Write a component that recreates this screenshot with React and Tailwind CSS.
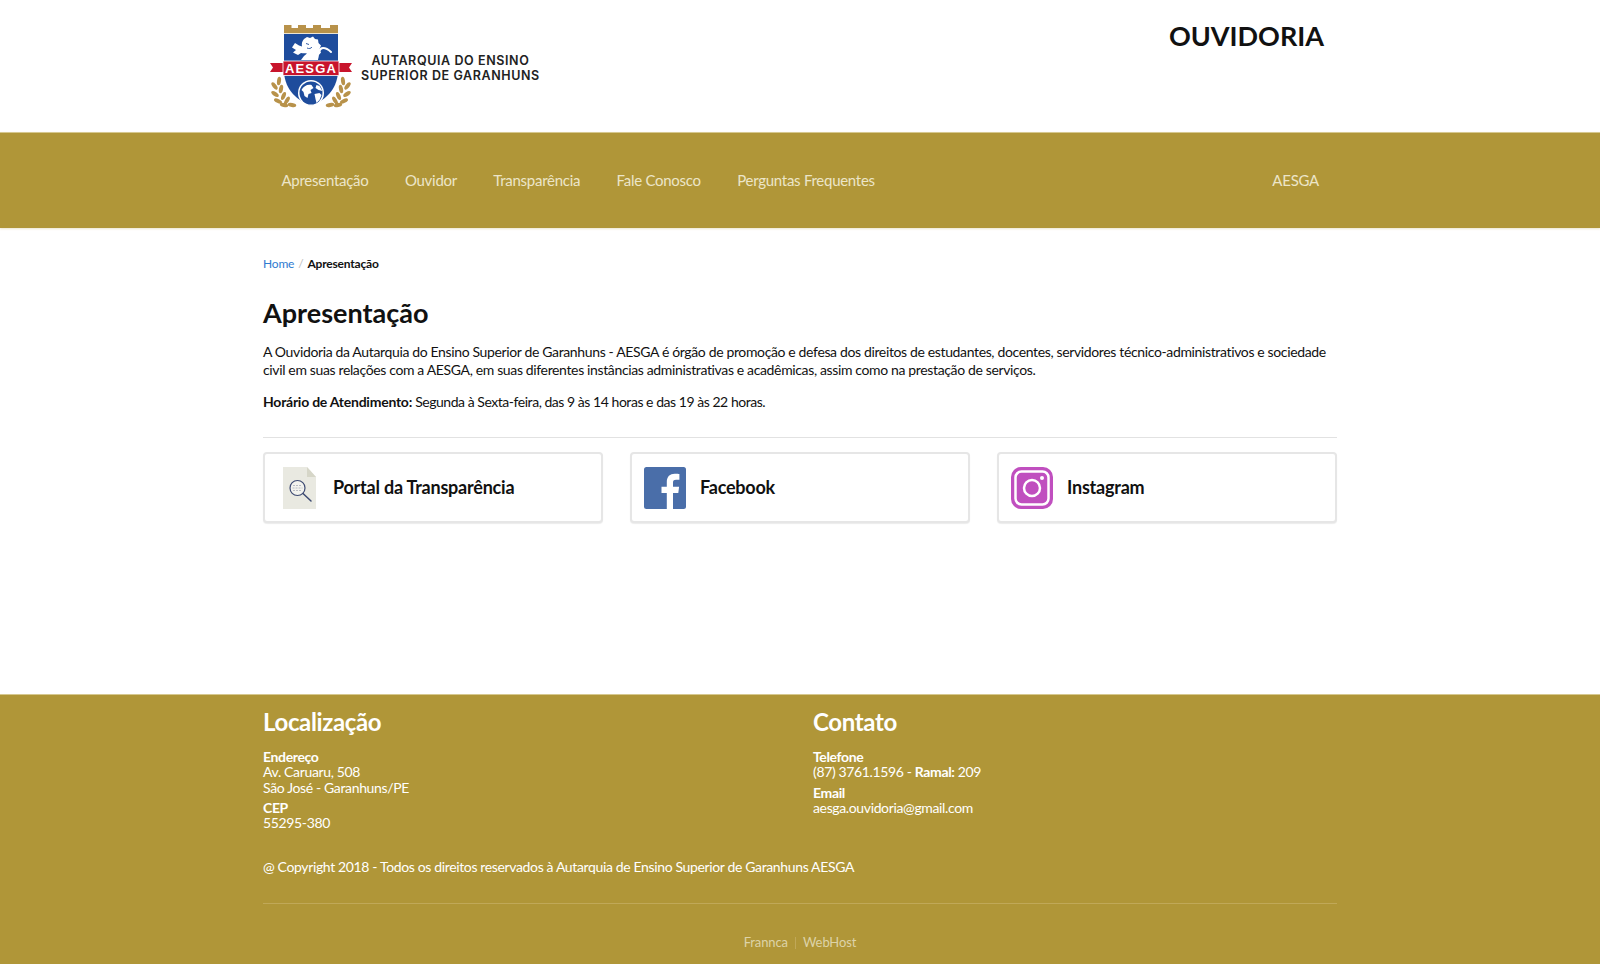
import { Fragment } from 'react';

const navLinks = ['Apresentação', 'Ouvidor', 'Transparência', 'Fale Conosco', 'Perguntas Frequentes'];

const laurelLeaves = [
  [12, 62, 8],
  [7.500, 67, -38],
  [14, 70, 12],
  [8, 75, -55],
  [16.500, 77, 22],
  [11, 82, -65],
  [20, 81.500, 32],
  [17, 86, -75],
  [25, 86, -80],
];

const Laurel = ({ flip = false }) => (
  <g transform={flip ? 'translate(88 0) scale(-1 1)' : undefined} fill="#b8924a">
    {laurelLeaves.map(([x, y, r]) => (
      <ellipse key={`${x}-${y}`} cx={x} cy={y} rx="2" ry="4.300" transform={`rotate(${r} ${x} ${y})`} />
    ))}
  </g>
);

const Crest = () => (
  <svg viewBox="0 0 89 92" className="h-[92px] w-[89px] shrink-0" aria-hidden="true">
    {/* crown */}
    <path d="M17 6h7.500v3H31V6h8v3h7V6h8v3h9V6h8v8.300H17z" fill="#b8924a" />
    {/* shield */}
    <path d="M17 15h54v36c0 17-10 29-27 36C27 80 17 68 17 51z" fill="#1e4c9c" />
    {/* lion */}
    <path
      d="M37 20L40 18L43 19L46 17.500L48 20L51 20.500L51.500 24L54 26.500L52.500 30L54 33.500L51.500 36.500L51 41H34L37 37L40 34.500C38 34 36 34.500 34 34L31 36L26 33.500L29 31L25 28.500L28 24L32 26.500L35 27.500C34.500 25 35 22 37 20z"
      fill="#ffffff"
    />
    <path d="M39 24.500l3 1M40 29c2 1 4 .500 5-1" fill="none" stroke="#1e4c9c" strokeWidth="0.900" />
    <path d="M50 40c1-6 2-11 6-11 3 0 5 1 8 4" fill="none" stroke="#ffffff" strokeWidth="2" strokeLinecap="round" />
    {/* ribbon */}
    <path d="M3 44h14v9H3l3-4.500z" fill="#c8142c" />
    <path d="M85 44H71v9h14l-3-4.500z" fill="#c8142c" />
    <rect x="16" y="42" width="56" height="14.500" fill="#c8142c" stroke="#ffffff" strokeWidth="0.800" />
    <text
      x="44"
      y="54.300"
      textAnchor="middle"
      fill="#ffffff"
      fontSize="13"
      fontWeight="700"
      letterSpacing="1.200"
      fontFamily="'Liberation Sans', sans-serif"
    >
      AESGA
    </text>
    {/* globe */}
    <circle cx="44" cy="74" r="13" fill="#ffffff" />
    <circle cx="44" cy="74" r="11.500" fill="#1e4c9c" />
    <path
      d="M34.500 71c2-4 6-6 10-5l2 3-3 2 1 3-3 1-1 4-3-2-1-4zM47.500 75l5-1 2 2-2 5-3 3-1-4zM49.500 66l3 1 3 5-4-1-3-2z"
      fill="#ffffff"
    />
    <Laurel />
    <Laurel flip />
  </svg>
);

const DocIcon = () => (
  <svg viewBox="0 0 33 42" className="h-[42px] w-[33px]" aria-hidden="true">
    <path d="M0 0h24l9 10v32H0z" fill="#e9e9e1" />
    <path d="M24 0l9 10h-9z" fill="#d6d6c8" />
    <circle cx="14.500" cy="21" r="7.500" fill="#f3f3ee" stroke="#3d4a72" strokeWidth="1.200" />
    <path d="M10 18.500h9M9.500 21h10M10 23.500h9" stroke="#b9bcc4" strokeWidth="1" strokeDasharray="2 1" />
    <path d="M20 26.500l8 7.500" stroke="#3d4a72" strokeWidth="1.500" strokeLinecap="round" />
  </svg>
);

const FacebookIcon = () => (
  <svg viewBox="0 0 42 42" className="h-[42px] w-[42px]" aria-hidden="true">
    <rect width="42" height="42" rx="2.500" fill="#4a6ea9" />
    <path
      d="M29 42V26h5.300l.8-6.300H29v-4c0-1.800.5-3 3.100-3h3.300V7.100c-.6-.1-2.500-.3-4.700-.3-4.700 0-7.900 2.900-7.900 8.100v4.800h-5.300V26h5.300v16z"
      fill="#ffffff"
    />
  </svg>
);

const InstagramIcon = () => (
  <svg viewBox="0 0 42 42" className="h-[42px] w-[42px]" aria-hidden="true">
    <rect width="42" height="42" rx="10" fill="#c04fbf" />
    <rect x="4.500" y="4.500" width="33" height="33" rx="6" fill="none" stroke="#ffffff" strokeWidth="2.500" />
    <circle cx="21" cy="21" r="8" fill="none" stroke="#ffffff" strokeWidth="2.500" />
    <circle cx="31" cy="11" r="2" fill="#ffffff" />
  </svg>
);

const LinkCard = ({ icon, label, iconPad = 'pl-[12px]', gap = 'gap-[14px]' }) => (
  <a className={`flex h-[71px] items-center ${gap} ${iconPad} rounded-[4px] border-2 border-[#e6e6e6] bg-white text-[18px] font-bold tracking-[-0.22px] text-[#111111] shadow-[0_1px_1px_rgba(0,0,0,0.08)]`}>
    {icon}
    <span>{label}</span>
  </a>
);

export default function App() {
  return (
    <div className="min-h-[964px] bg-white font-['Lato','Open_Sans',sans-serif] text-[14px] text-[#111111]">
      {/* Header */}
      <header className="h-[132px]">
        <div className="mx-auto flex w-[1074px] justify-between">
          <div className="flex pt-[19px] pl-[4px]">
            <Crest />
            <div className="ml-[5px] mt-[34px] text-center font-['Inter',sans-serif] text-[12.5px] leading-[15px] font-semibold tracking-[0.6px] text-[#222222]">
              <div>AUTARQUIA DO ENSINO</div>
              <div>SUPERIOR DE GARANHUNS</div>
            </div>
          </div>
          <h2 className="pt-[19px] pr-[13px] text-[27px] leading-[34px] font-bold text-[#111111]">OUVIDORIA</h2>
        </div>
      </header>

      {/* Nav */}
      <nav className="h-[96px] border-t border-[#d6c88f] bg-[#b09638] shadow-[0_1px_2px_rgba(176,150,56,0.25)]">
        <div className="mx-auto flex h-full w-[1074px] items-center justify-between text-[15px] tracking-[-0.27px] text-[#ece5c8]">
          <ul className="ml-[0.3px] flex">
            {navLinks.map((link) => (
              <li key={link} className="px-[18.200px]">
                {link}
              </li>
            ))}
          </ul>
          <span className="px-[18px]">AESGA</span>
        </div>
      </nav>

      <main className="mx-auto h-[466px] w-[1074px] pt-[27px]">
        {/* Breadcrumb */}
        <div className="flex h-[18px] items-center text-[12px] tracking-[-0.2px]">
          <span className="text-[#2f7bd0]">Home</span>
          <span className="mx-[4px] text-[#bbbbbb]">/</span>
          <span className="font-bold">Apresentação</span>
        </div>

        <h1 className="mt-[22px] text-[27px] leading-[36px] font-bold">Apresentação</h1>

        <p className="mt-[12px] leading-[18px] tracking-[-0.36px]">
          A Ouvidoria da Autarquia do Ensino Superior de Garanhuns - AESGA é órgão de promoção e defesa dos direitos de estudantes, docentes, servidores técnico-administrativos e sociedade civil em suas relações com a AESGA, em suas diferentes instâncias administrativas e acadêmicas, assim como na prestação de serviços.
        </p>
        <p className="mt-[14px] leading-[18px] tracking-[-0.46px]">
          <strong className="tracking-[-0.24px]">Horário de Atendimento:</strong> Segunda à Sexta-feira, das 9 às 14 horas e das 19 às 22 horas.
        </p>

        <hr className="mt-[26px] border-[#e2e2e2]" />

        {/* Link cards */}
        <div className="mt-[14px] grid grid-cols-3 gap-[27px]">
          <LinkCard icon={<DocIcon />} label="Portal da Transparência" iconPad="pl-[18px]" gap="gap-[17px]" />
          <LinkCard icon={<FacebookIcon />} label="Facebook" />
          <LinkCard icon={<InstagramIcon />} label="Instagram" />
        </div>
      </main>

      {/* Footer */}
      <footer className="h-[270px] border-t border-[#d6c88f] bg-[#b09638] text-white">
        <div className="mx-auto w-[1074px] tracking-[-0.36px]">
          <div className="grid grid-cols-[550px_1fr] pt-[12px]">
            <div>
              <h3 className="text-[24px] leading-[30px] font-bold">Localização</h3>
              <p className="mt-[12px] leading-[15.300px]">
                <strong>Endereço</strong>
                <br />
                Av. Caruaru, 508
                <br />
                São José - Garanhuns/PE
              </p>
              <p className="mt-[5px] leading-[15.300px]">
                <strong>CEP</strong>
                <br />
                55295-380
              </p>
            </div>
            <div>
              <h3 className="text-[24px] leading-[30px] font-bold">Contato</h3>
              <p className="mt-[12px] leading-[15.300px]">
                <strong>Telefone</strong>
                <br />
                (87) 3761.1596 - <strong>Ramal:</strong> 209
              </p>
              <p className="mt-[5px] leading-[15.300px]">
                <strong>Email</strong>
                <br />
                aesga.ouvidoria@gmail.com
              </p>
            </div>
          </div>

          <p className="mt-[28px] leading-[18px]">
            @ Copyright 2018 - Todos os direitos reservados à Autarquia de Ensino Superior de Garanhuns AESGA
          </p>

          <hr className="mt-[27px] border-[#c0a858]" />

          <div className="mt-[29px] flex items-center justify-center text-[13px] tracking-[-0.1px] text-[#ddd3a8]">
            {['Frannca', 'WebHost'].map((name, i) => (
              <Fragment key={name}>
                {i > 0 && <span className="mx-[7px] h-[12px] w-px bg-[#c0a858]" />}
                <span>{name}</span>
              </Fragment>
            ))}
          </div>
        </div>
      </footer>
    </div>
  );
}
